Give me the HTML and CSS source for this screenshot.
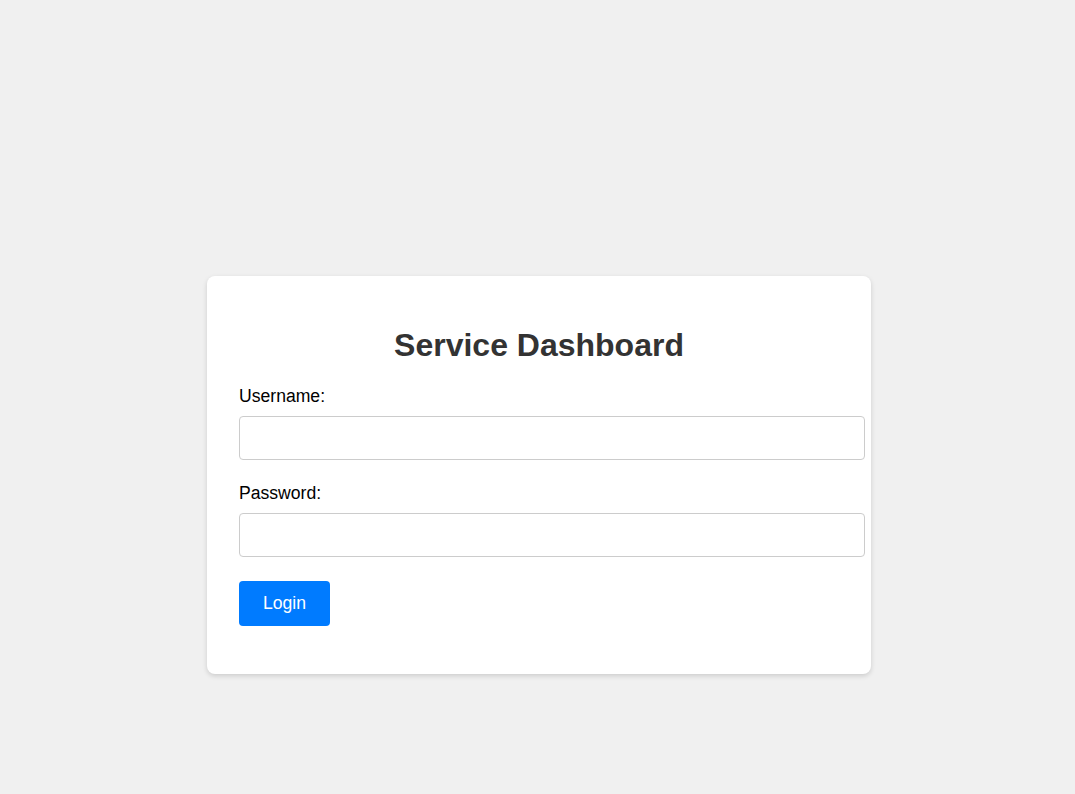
FILE: index.html
```html
<!DOCTYPE html>
<html lang="en">
<head>
<meta charset="utf-8">
<title>Service Dashboard</title>
<link rel="stylesheet" href="styles.css">
</head>
<body>
<main class="page">
  <section class="card">
    <h1 class="title">Service Dashboard</h1>
    <form class="form">
      <label class="label" for="username">Username:</label>
      <input class="input" id="username" type="text">
      <label class="label label-gap" for="password">Password:</label>
      <input class="input" id="password" type="password">
      <button class="button" type="button">Login</button>
    </form>
  </section>
</main>
</body>
</html>
```
FILE: styles.css
```css
html, body {
  margin: 0;
  padding: 0;
  background: #f0f0f0;
  font-family: "Liberation Sans", Arial, sans-serif;
}
.page {
  display: flex;
  justify-content: center;
  padding: 276px 0 0 3px;
  min-height: 794px;
  box-sizing: border-box;
}
.card {
  width: 600px;
  background: #fff;
  border-radius: 8px;
  padding: 30px 32px 48px;
  box-shadow: 0 2px 5px rgba(0, 0, 0, 0.15);
  align-self: flex-start;
}
.title {
  margin: 21px 0 22px;
  font-size: 32px;
  line-height: 37px;
  font-weight: bold;
  color: #333;
  text-align: center;
}
.form {
  display: flex;
  flex-direction: column;
  align-items: flex-start;
}
.label {
  display: block;
  font-size: 17.6px;
  line-height: 20px;
  color: #000;
  margin-bottom: 10px;
}
.label-gap {
  margin-top: 23px;
}
.input {
  width: 100%;
  padding: 12px;
  border: 1px solid #ccc;
  border-radius: 4px;
  font-size: 16px;
  line-height: 18px;
  box-sizing: content-box;
  height: 18px;
  margin: 0;
  font-family: inherit;
}
.button {
  margin-top: 24px;
  padding: 12px 24px 13px;
  font-size: 17.6px;
  line-height: 20px;
  font-family: inherit;
  color: #fff;
  background: #007bff;
  border: none;
  border-radius: 4px;
  cursor: pointer;
}
```
